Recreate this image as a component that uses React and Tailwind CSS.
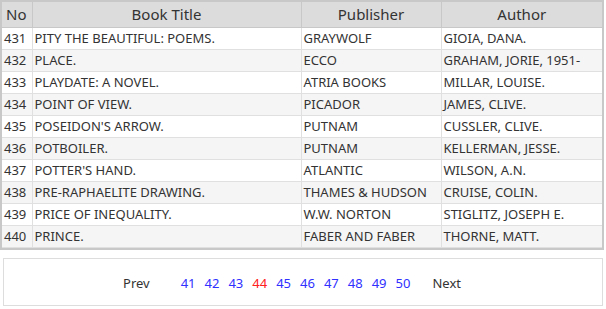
const books = [
  [431, 'PITY THE BEAUTIFUL: POEMS.', 'GRAYWOLF', 'GIOIA, DANA.'],
  [432, 'PLACE.', 'ECCO', 'GRAHAM, JORIE, 1951-'],
  [433, 'PLAYDATE: A NOVEL.', 'ATRIA BOOKS', 'MILLAR, LOUISE.'],
  [434, 'POINT OF VIEW.', 'PICADOR', 'JAMES, CLIVE.'],
  [435, "POSEIDON'S ARROW.", 'PUTNAM', 'CUSSLER, CLIVE.'],
  [436, 'POTBOILER.', 'PUTNAM', 'KELLERMAN, JESSE.'],
  [437, "POTTER'S HAND.", 'ATLANTIC', 'WILSON, A.N.'],
  [438, 'PRE-RAPHAELITE DRAWING.', 'THAMES & HUDSON', 'CRUISE, COLIN.'],
  [439, 'PRICE OF INEQUALITY.', 'W.W. NORTON', 'STIGLITZ, JOSEPH E.'],
  [440, 'PRINCE.', 'FABER AND FABER', 'THORNE, MATT.'],
]

const pages = [41, 42, 43, 44, 45, 46, 47, 48, 49, 50]

export default function App() {
  return (
    <div className="w-[606px] h-[309px] bg-white text-[#333] font-['Noto_Sans','Noto_Sans_CJK_KR',sans-serif]">
      {/* Table */}
      <div className="w-[604px] border-2 border-[#c8c8c8]">
        <table className="w-full border-collapse table-fixed text-[13px]">
          <colgroup>
            <col className="w-[30px]" />
            <col className="w-[269px]" />
            <col className="w-[140px]" />
            <col />
          </colgroup>
          <thead>
            <tr className="bg-[#dcdcdc] h-[25px] text-[15px]">
              <th className="font-normal border border-[#c8c8c8] border-t-0 border-l-0 px-1 text-left">No</th>
              <th className="font-normal border border-[#c8c8c8] border-t-0">Book Title</th>
              <th className="font-normal border border-[#c8c8c8] border-t-0">Publisher</th>
              <th className="font-normal border border-[#c8c8c8] border-t-0 border-r-0">Author</th>
            </tr>
          </thead>
          <tbody>
            {books.map(([no, title, pub, author], i) => (
              <tr key={no} className={`h-[22px] ${i % 2 === 1 ? 'bg-[#f5f5f5]' : 'bg-white'}`}>
                <td className="border border-[#e0e0e0] border-l-0 px-[2px] leading-none">{no}</td>
                <td className="border border-[#e0e0e0] px-[2px] leading-none whitespace-nowrap">{title}</td>
                <td className="border border-[#e0e0e0] px-[2px] leading-none whitespace-nowrap">{pub}</td>
                <td className="border border-[#e0e0e0] border-r-0 px-[2px] leading-none whitespace-nowrap">{author}</td>
              </tr>
            ))}
          </tbody>
        </table>
      </div>

      {/* Pagination */}
      <div className="ml-[3px] mt-[8px] w-[600px] h-[48px] border border-[#dddddd] flex items-center justify-center pt-[4px] pr-[22px] text-[13px]">
        <span className="mr-[31px]">Prev</span>
        <div className="flex gap-[9px]">
          {pages.map(p => (
            <span key={p} className={p === 44 ? 'text-[#ff2020]' : 'text-[#3030ff]'}>{p}</span>
          ))}
        </div>
        <span className="ml-[22px]">Next</span>
      </div>
    </div>
  )
}
